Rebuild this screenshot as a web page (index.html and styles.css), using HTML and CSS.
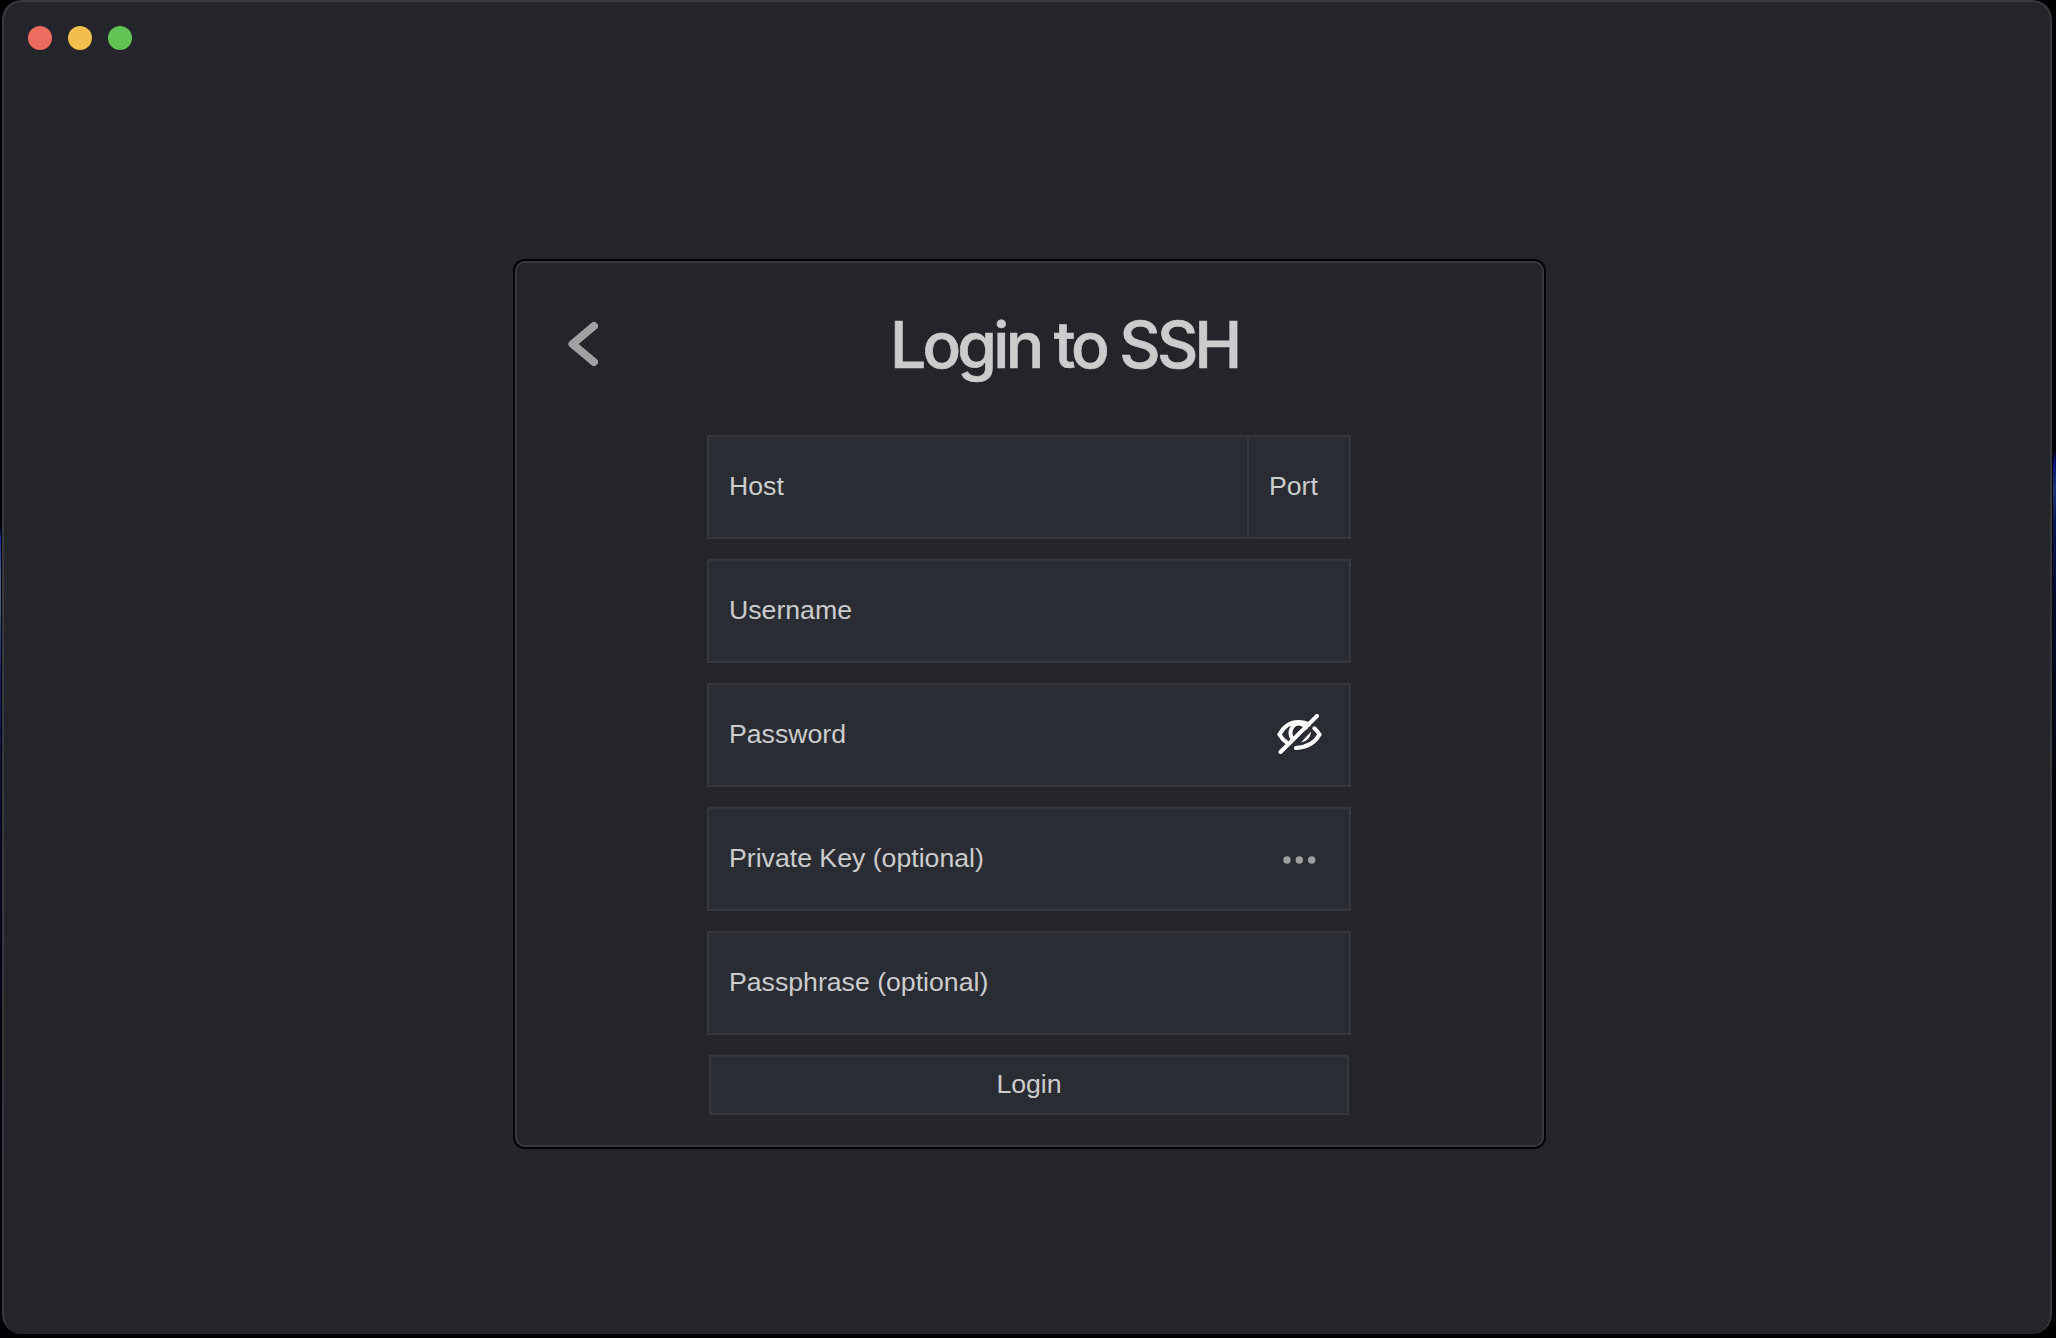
FILE: index.html
```html
<!DOCTYPE html>
<html lang="en">
<head>
<meta charset="utf-8">
<title>Login to SSH</title>
<link rel="stylesheet" href="styles.css">
</head>
<body>
<main class="window">
  <div class="titlebar">
    <span class="light light-close"></span>
    <span class="light light-minimize"></span>
    <span class="light light-zoom"></span>
  </div>
  <section class="card">
    <header class="card-header">
      <svg class="back" viewBox="0 0 32 46" width="32" height="46"><path d="M28 5 6.5 23 28 41"/></svg>
      <h1 class="title">Login to SSH</h1>
    </header>
    <form class="form">
      <div class="field">
        <span class="label host">Host</span>
        <span class="label port">Port</span>
      </div>
      <div class="field"><span class="label">Username</span></div>
      <div class="field">
        <span class="label">Password</span>
        <svg class="eye" viewBox="0 0 46 42" width="46" height="42">
          <path d="M12 29.5Q6.5 26 3.4 20.5Q10 7.9 22.5 7.9Q29 7.9 33 10.5"/>
          <path d="M16.5 25.2C12 18.5 15.8 9.5 23 9.5C26.2 9.5 28.3 11.5 29.8 13.7"/>
          <path d="M38.3 14.3Q41.8 17.5 43.5 20.5Q36.8 32.8 20 34"/>
          <path class="eye-iris" d="M35 17.5Q34.4 26.5 25 28.5Z"/>
          <path d="M41 2 4.5 38"/>
        </svg>
      </div>
      <div class="field">
        <span class="label">Private Key (optional)</span>
        <svg class="dots" viewBox="0 0 34 10" width="34" height="10"><circle cx="5" cy="5" r="3.7"/><circle cx="17.3" cy="5" r="3.7"/><circle cx="29.7" cy="5" r="3.7"/></svg>
      </div>
      <div class="field"><span class="label">Passphrase (optional)</span></div>
      <button class="login" type="button">Login</button>
    </form>
  </section>
</main>
</body>
</html>
```
FILE: styles.css
```css
* { box-sizing: border-box; }

body {
  margin: 0;
  height: 1338px;
  padding: 0 4px 4px 2px;
  overflow: hidden;
  background:
    linear-gradient(#000 525px, #1233a0 540px, #47608c 575px, #405a85 610px, #101f63 680px, #040a2c 850px, #02040f 1338px) 0 0 / 1px 100% no-repeat,
    linear-gradient(#000 450px, #06127a 464px, #1d356f 490px, #07134f 525px, #030b28 610px, #010208 800px, #000 1338px) 100% 0 / 3px 100% no-repeat,
    #000;
  font-family: "Liberation Sans", Arial, sans-serif;
  color: #ccc;
}

.window {
  height: 1334px;
  display: flex;
  flex-direction: column;
  align-items: center;
  background: #24252a;
  border: 2px solid #38393e;
  border-bottom: 0;
  border-radius: 20px;
}

.titlebar {
  align-self: stretch;
  height: 259px;
  flex: none;
  display: flex;
  gap: 16px;
  padding: 24px;
}

.light {
  width: 24px;
  height: 24px;
  border-radius: 50%;
}
.light-close { background: #ed6a5e; }
.light-minimize { background: #f4be4f; }
.light-zoom { background: #61c454; }

.card {
  width: 1029px;
  height: 886px;
  flex: none;
  margin-left: 5px;
  border: 2px solid #38393e;
  border-radius: 10px;
  box-shadow: 0 0 0 2px #000;
}

.card-header {
  height: 172px;
  display: flex;
  align-items: flex-start;
  padding-left: 49px;
}

.back {
  flex: none;
  margin-top: 58px;
  fill: none;
  stroke: #a0a0a0;
  stroke-width: 8;
  stroke-linecap: round;
  stroke-linejoin: round;
}

.title {
  margin: 42px 0 0 292px;
  font: 500 64px/80px Inter, sans-serif;
  letter-spacing: -3.75px;
  -webkit-text-stroke: 0.7px #ccc;
  white-space: nowrap;
}

.form {
  width: 644px;
  margin-left: 190px;
  display: flex;
  flex-direction: column;
  gap: 20px;
}

.field {
  height: 104px;
  display: flex;
  align-items: center;
  justify-content: space-between;
  padding: 0 27px 0 20px;
  background: #2a2c34;
  border: 2px solid #36383d;
  font-size: 26.67px;
}

.label { padding-bottom: 1px; }

.port {
  align-self: stretch;
  display: flex;
  align-items: center;
  width: 102px;
  margin-right: -27px;
  padding-left: 20px;
  border-left: 2px solid #36383d;
}

.eye {
  fill: none;
  stroke: #fff;
  stroke-width: 4;
  stroke-linecap: round;
}
.eye-iris {
  fill: #fff;
  stroke: none;
}

.dots {
  margin: 1px 6px 0 0;
  fill: #a0a0a0;
}

.login {
  width: 640px;
  height: 60px;
  margin: 0 auto;
  padding: 0 0 2px;
  background: #2a2c34;
  border: 2px solid #36383d;
  color: #ccc;
  font: 26.67px "Liberation Sans", Arial, sans-serif;
}
```
